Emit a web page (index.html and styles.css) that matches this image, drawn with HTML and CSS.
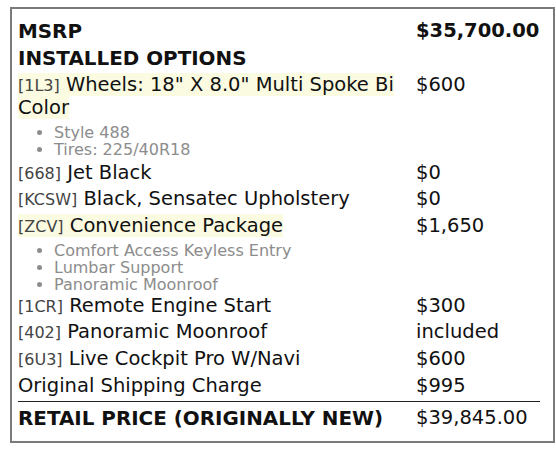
FILE: index.html
```html
<!DOCTYPE html>
<html>
<head>
<meta charset="utf-8">
<link rel="stylesheet" href="styles.css">
</head>
<body>
<div class="box">
  <table class="sticker">
    <tr class="head">
      <td class="label">MSRP</td>
      <td class="price">$35,700.00</td>
    </tr>
    <tr class="head">
      <td class="label" colspan="2">INSTALLED OPTIONS</td>
    </tr>
    <tr>
      <td class="label"><span class="hl"><span class="code">[1L3]</span> Wheels: 18" X 8.0" Multi Spoke Bi Color</span></td>
      <td class="price">$600</td>
    </tr>
    <tr>
      <td class="sub" colspan="2">
        <ul>
          <li>Style 488</li>
          <li>Tires: 225/40R18</li>
        </ul>
      </td>
    </tr>
    <tr>
      <td class="label"><span class="code">[668]</span> Jet Black</td>
      <td class="price">$0</td>
    </tr>
    <tr>
      <td class="label"><span class="code">[KCSW]</span> Black, Sensatec Upholstery</td>
      <td class="price">$0</td>
    </tr>
    <tr>
      <td class="label"><span class="hl"><span class="code">[ZCV]</span> Convenience Package</span></td>
      <td class="price">$1,650</td>
    </tr>
    <tr>
      <td class="sub" colspan="2">
        <ul class="tight">
          <li>Comfort Access Keyless Entry</li>
          <li>Lumbar Support</li>
          <li>Panoramic Moonroof</li>
        </ul>
      </td>
    </tr>
    <tr>
      <td class="label"><span class="code">[1CR]</span> Remote Engine Start</td>
      <td class="price">$300</td>
    </tr>
    <tr>
      <td class="label"><span class="code">[402]</span> Panoramic Moonroof</td>
      <td class="price">included</td>
    </tr>
    <tr>
      <td class="label"><span class="code">[6U3]</span> Live Cockpit Pro W/Navi</td>
      <td class="price">$600</td>
    </tr>
    <tr>
      <td class="label">Original Shipping Charge</td>
      <td class="price">$995</td>
    </tr>
    <tr class="total">
      <td class="label">RETAIL PRICE (ORIGINALLY NEW)</td>
      <td class="price">$39,845.00</td>
    </tr>
  </table>
</div>
</body>
</html>
```
FILE: styles.css
```css
html, body {
  margin: 0;
  padding: 0;
  background: #ffffff;
}
body {
  font-family: "DejaVu Sans", sans-serif;
  font-size: 19.5px;
  color: #111;
}
.box {
  margin: 7px 0 0 10px;
  width: 535px;
  border: 2px solid #7a7a7a;
  padding: 8px 0 8px 6px;
}
.sticker {
  border-collapse: separate;
  border-spacing: 0 2px;
  width: 522px;
}
.sticker td {
  padding: 1px 0;
  vertical-align: top;
  line-height: 1.164;
}
.head td {
  font-weight: bold;
}
.head .label,
.total .label {
  font-size: 19.9px;
}
.price {
  width: 124px;
  white-space: nowrap;
}
.label {
  padding-right: 16px !important;
}
.hl {
  background: #fbfbe2;
}
.code {
  font-size: 16px;
  line-height: 1;
  color: #444;
}
.sub ul {
  margin: 0;
  padding: 0 0 0 36px;
  font-size: 16px;
  line-height: 17px;
  color: #8c8c8c;
}
.sub ul.tight {
  margin-bottom: -2px;
}
.sub li {
  margin: 0;
}
.total td {
  border-top: 1px solid #222;
  padding-top: 5px;
}
.total .label {
  font-weight: bold;
}
```
